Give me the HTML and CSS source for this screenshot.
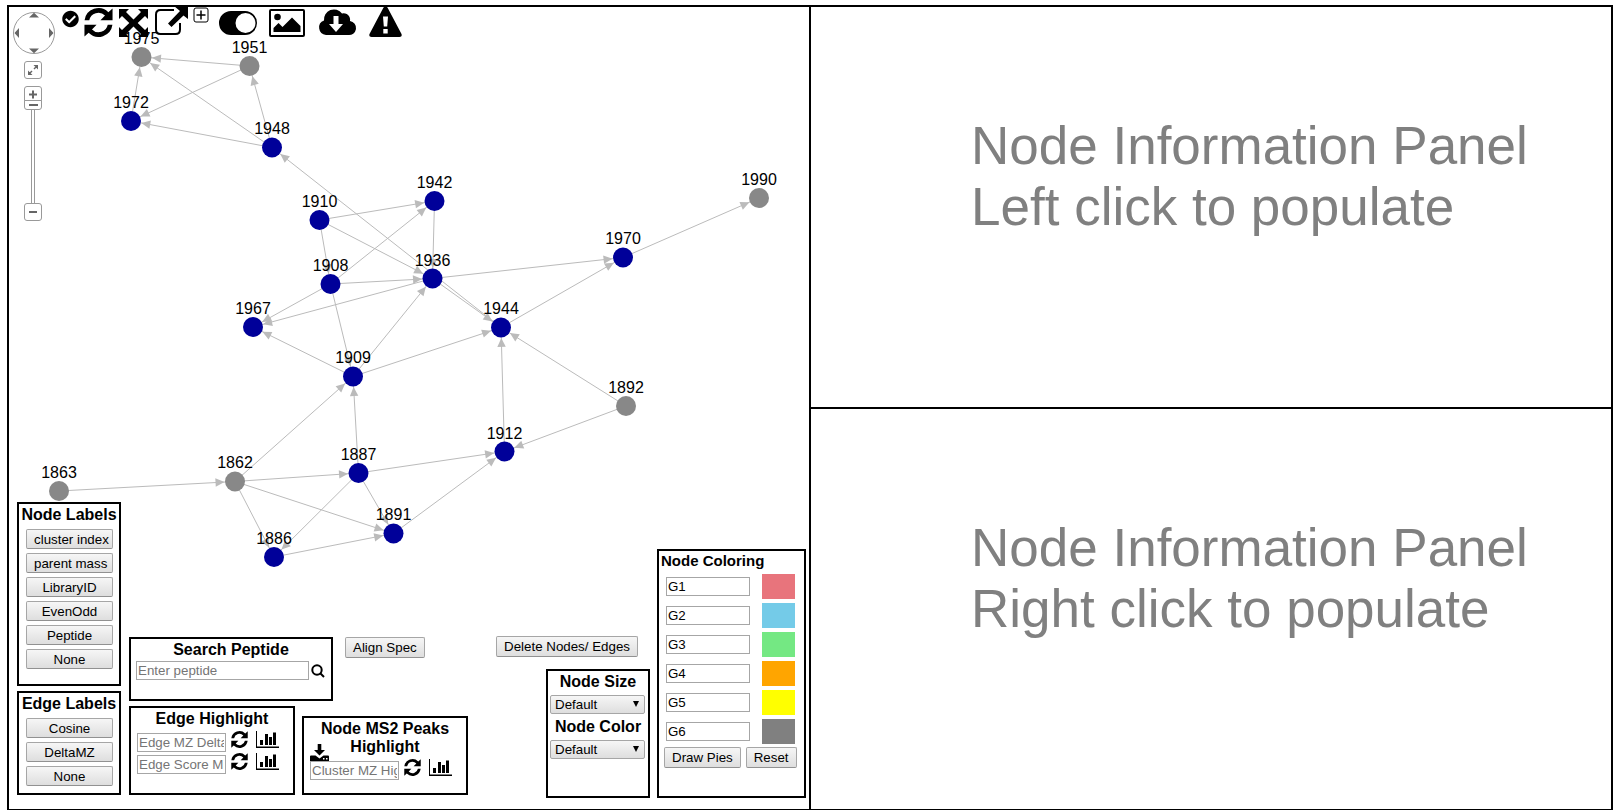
FILE: index.html
```html
<!DOCTYPE html>
<html lang="en">
<head>
<meta charset="utf-8">
<title>Network Visualizer</title>
<link rel="stylesheet" href="styles.css">
</head>
<body>
<svg class="defs" aria-hidden="true">
  <symbol id="i-sync" viewBox="0 0 512 512"><path d="M371 133A164 164 0 0 0 93 216H10A248 248 0 0 1 430 74L504 8V216H290zM141 379A164 164 0 0 0 419 296H502A248 248 0 0 1 82 438L8 504V296H222z"/></symbol>
  <symbol id="i-chart" viewBox="0 0 23 17"><path d="M0 0h1v15.500h22v1.500H0zM4 9h3v5H4zM9 3h3v11H9zM13 6h3v8h-3zM17 1.500h3V14h-3z"/></symbol>
</svg>

<main class="frame">
  <section class="network" aria-label="Molecular network">
    <svg class="graph" viewBox="9 7 800 802" preserveAspectRatio="xMinYMin meet">
      <defs>
        <marker id="arrow" markerUnits="userSpaceOnUse" markerWidth="24" markerHeight="10" refX="24" refY="5" orient="auto"><path class="arrow" d="M13.500 5L4.500 .8V9.200z"/></marker>
      </defs>
      <g class="edges">
        <path d="M249.500 66L141.500 57"/><path d="M249.500 66L131 121"/><path d="M272 147.500L141.500 57"/>
        <path d="M272 147.500L131 121"/><path d="M272 147.500L249.500 66"/><path d="M131 121L141.500 57"/>
        <path d="M501 327.500L272 147.500"/><path d="M319.500 220L434.500 201"/><path d="M319.500 220L432.500 278.500"/>
        <path d="M319.500 220L330.500 284"/><path d="M330.500 284L353 376.500"/><path d="M330.500 284L434.500 201"/>
        <path d="M330.500 284L432.500 278.500"/><path d="M330.500 284L253 327"/><path d="M432.500 278.500L253 327"/>
        <path d="M353 376.500L253 327"/><path d="M353 376.500L432.500 278.500"/><path d="M353 376.500L501 327.500"/>
        <path d="M434.500 201L432.500 278.500"/><path d="M432.500 278.500L623 257.500"/><path d="M501 327.500L623 257.500"/>
        <path d="M623 257.500L759 198"/><path d="M432.500 278.500L501 327.500"/><path d="M626 406L501 327.500"/>
        <path d="M626 406L504.500 451.500"/><path d="M504.500 451.500L501 327.500"/><path d="M393.500 533.500L504.500 451.500"/>
        <path d="M358.500 473L504.500 451.500"/><path d="M358.500 473L353 376.500"/><path d="M235 481.500L353 376.500"/>
        <path d="M235 481.500L358.500 473"/><path d="M235 481.500L393.500 533.500"/><path d="M235 481.500L274 557"/>
        <path d="M59 491L235 481.500"/><path d="M358.500 473L393.500 533.500"/><path d="M358.500 473L274 557"/>
        <path d="M274 557L393.500 533.500"/>
      </g>
      <g class="nodes">
        <circle class="plain" cx="141.500" cy="57" r="10"/><circle class="plain" cx="249.500" cy="66" r="10"/>
        <circle cx="131" cy="121" r="10"/><circle cx="272" cy="147.500" r="10"/>
        <circle cx="319.500" cy="220" r="10"/><circle cx="330.500" cy="284" r="10"/>
        <circle cx="253" cy="327" r="10"/><circle cx="353" cy="376.500" r="10"/>
        <circle class="plain" cx="59" cy="491" r="10"/><circle class="plain" cx="235" cy="481.500" r="10"/>
        <circle cx="358.500" cy="473" r="10"/><circle cx="434.500" cy="201" r="10"/>
        <circle cx="432.500" cy="278.500" r="10"/><circle cx="501" cy="327.500" r="10"/>
        <circle cx="623" cy="257.500" r="10"/><circle class="plain" cx="759" cy="198" r="10"/>
        <circle class="plain" cx="626" cy="406" r="10"/><circle cx="504.500" cy="451.500" r="10"/>
        <circle cx="393.500" cy="533.500" r="10"/><circle cx="274" cy="557" r="10"/>
      </g>
      <g class="labels">
        <text x="141.500" y="44">1975</text><text x="249.500" y="53">1951</text><text x="131" y="108">1972</text>
        <text x="272" y="134">1948</text><text x="319.500" y="207">1910</text><text x="330.500" y="271">1908</text>
        <text x="253" y="314">1967</text><text x="353" y="363">1909</text><text x="59" y="478">1863</text>
        <text x="235" y="468">1862</text><text x="358.500" y="460">1887</text><text x="434.500" y="188">1942</text>
        <text x="432.500" y="266">1936</text><text x="501" y="314">1944</text><text x="623" y="244">1970</text>
        <text x="759" y="185">1990</text><text x="626" y="393">1892</text><text x="504.500" y="439">1912</text>
        <text x="393.500" y="520">1891</text><text x="274" y="544">1886</text>
      </g>
    </svg>

    <div class="panzoom">
      <button class="panner" aria-label="Pan"><svg width="42" height="42" viewBox="0 0 42 42"><circle cx="21" cy="21" r="20.500"/><path d="M21 .8l5 4.700H16zM21 41.200l5-4.700H16zM1.500 21l4.500-5v10zM40.500 21l-4.500-5v10z"/></svg></button>
      <div class="pz-controls">
        <button class="pz-btn fit" aria-label="Fit"><svg width="16" height="16" viewBox="0 0 16 16"><path d="M13 3v4.500L8.500 3zM3 13V8.500L7.500 13zM10.500 4.500l1 1-2 2-1-1zM6.500 8.500l1 1-2 2-1-1z"/></svg></button>
        <button class="pz-btn" aria-label="Zoom in"><svg width="16" height="16" viewBox="0 0 16 16"><path d="M4 6.500h8v2H4zM7 3.500h2v8H7z"/></svg></button>
        <input class="pz-slider" type="range" min="0" max="100" value="100" aria-label="Zoom level">
        <button class="pz-btn" aria-label="Zoom out"><svg width="16" height="16" viewBox="0 0 16 16"><path d="M4 7h8v2H4z"/></svg></button>
      </div>
    </div>

    <div class="toolbar">
      <button aria-label="Select"><svg width="17" height="26" viewBox="0 -136 512 784"><path d="M504 256c0 136.967-111.033 248-248 248S8 392.967 8 256 119.033 8 256 8s248 111.033 248 248zM227.314 387.314l184-184c6.248-6.248 6.248-16.379 0-22.627l-22.627-22.627c-6.248-6.249-16.379-6.249-22.628 0L216 308.118l-70.059-70.059c-6.248-6.248-16.379-6.248-22.628 0l-22.627 22.627c-6.248 6.248-6.248 16.379 0 22.627l104 104c6.249 6.249 16.379 6.249 22.628.001z"/></svg></button>
      <button aria-label="Refresh"><svg width="29" height="32"><use href="#i-sync" y="2" width="29" height="29"/></svg></button>
      <button aria-label="Expand"><svg width="31" height="32" viewBox="0 0 31 32"><path d="M1 3h10L8 6l7.500 7.500L23 6l-3-3h10v10l-3-3-7.300 7 7.300 7 3-3v10H20l3-3-7.500-7.500L8 28l3 3H1V21l3 3 7.300-7L4 10l-3 3z"/></svg></button>
      <button aria-label="Open in new window"><svg width="34" height="32" viewBox="0 0 34 32"><path class="outline" d="M20 4H6.500Q2 4 2 8.500v15Q2 28 6.500 28h15q4.500 0 4.500-4.500V17"/><path d="M20 0h14v13l-4.500-3.500L17.500 21l-3.500-3.500L26 5z"/></svg></button>
      <button aria-label="Add"><svg width="16" height="32" viewBox="0 0 16 32"><rect class="outline thin" x="1" y="2" width="14" height="14" rx="2"/><path d="M7.250 4.500h1.500v3.750h3.750v1.500H8.750v3.750h-1.500V9.750H3.500v-1.500h3.750z"/></svg></button>
      <button aria-label="Toggle"><svg width="48" height="32" viewBox="0 0 48 32"><path fill-rule="evenodd" d="M17 5h14a12 12 0 0 1 0 24H17a12 12 0 0 1 0-24zM31.500 7a10 10 0 1 0 0 20 10 10 0 0 0 0-20z"/></svg></button>
      <button aria-label="Save image"><svg width="40" height="32" viewBox="0 0 40 32"><rect class="outline" x="3" y="4" width="34" height="26" rx="1"/><circle cx="10.500" cy="11" r="3.300"/><path d="M6.500 26v-4l5-5 4 4 9.500-9.500 8.500 8.500v6z"/></svg></button>
      <button aria-label="Download"><svg width="50" height="32" viewBox="0 0 50 32"><path fill-rule="evenodd" d="M14 29A7.500 7.500 0 0 1 12 14.500 10 10 0 0 1 30 7.500 6.500 6.500 0 0 1 38 15 7 7 0 0 1 36 29zM21.500 10V18H17l7 8 7-8h-4.500V10z"/></svg></button>
      <button aria-label="Report a problem"><svg width="37" height="32" viewBox="0 0 37 32"><path fill-rule="evenodd" d="M16.500 1.500Q18.500-.5 20.500 1.500L34.500 28q1 2.800-2 3h-28q-3-.2-2-3zM16 10.500l.8 10h3.400l.8-10zM16.300 23v4.500h4.400V23z"/></svg></button>
    </div>

    <div class="dock dock-left">
      <div class="stack">
        <section class="panel label-panel">
          <h2>Node Labels</h2>
          <div class="options">
            <button class="btn">cluster index</button>
            <button class="btn">parent mass</button>
            <button class="btn">LibraryID</button>
            <button class="btn">EvenOdd</button>
            <button class="btn">Peptide</button>
            <button class="btn">None</button>
          </div>
        </section>
        <section class="panel label-panel edge-labels">
          <h2>Edge Labels</h2>
          <div class="options">
            <button class="btn">Cosine</button>
            <button class="btn">DeltaMZ</button>
            <button class="btn">None</button>
          </div>
        </section>
      </div>
      <div class="stack">
        <div class="row search-row">
          <section class="panel search">
            <h2><label for="peptide">Search Peptide</label></h2>
            <div class="search-line">
              <input class="field" id="peptide" type="text" placeholder="Enter peptide">
              <button class="icon-btn" aria-label="Search"><svg width="14" height="14" viewBox="0 0 14 14"><circle class="outline" cx="6" cy="6" r="4.700"/><path class="outline" d="M9.500 9.500l3.500 3.500"/></svg></button>
            </div>
          </section>
          <button class="btn">Align Spec</button>
        </div>
        <div class="row">
          <section class="panel highlight edge-highlight">
            <h2>Edge Highlight</h2>
            <div class="lines">
              <div class="line">
                <input class="field" type="text" placeholder="Edge MZ Delta" aria-label="Edge MZ Delta">
                <button class="icon-btn" aria-label="Refresh"><svg width="17" height="17"><use href="#i-sync"/></svg></button>
                <button class="icon-btn chart" aria-label="Histogram"><svg width="23" height="17"><use href="#i-chart"/></svg></button>
              </div>
              <div class="line">
                <input class="field" type="text" placeholder="Edge Score Min" aria-label="Edge Score Min">
                <button class="icon-btn" aria-label="Refresh"><svg width="17" height="17"><use href="#i-sync"/></svg></button>
                <button class="icon-btn chart" aria-label="Histogram"><svg width="23" height="17"><use href="#i-chart"/></svg></button>
              </div>
            </div>
          </section>
          <section class="panel highlight peaks">
            <h2>Node MS2 Peaks Highlight</h2>
            <div class="lines">
              <button class="icon-btn download" aria-label="Download"><svg width="19" height="17" viewBox="0 0 19 17"><path d="M7.700 0h3.600v6H15l-5.500 5.500L4 6h3.700zM0 12.500q0-1 1-1h4.500l4 3 4-3H18q1 0 1 1V17H0z"/><path class="hole" d="M13 14h1.500v1.500H13zM16 14h1.500v1.500H16z"/></svg></button>
              <div class="line">
                <input class="field" type="text" placeholder="Cluster MZ Highlight" aria-label="Cluster MZ Highlight">
                <button class="icon-btn" aria-label="Refresh"><svg width="17" height="17"><use href="#i-sync"/></svg></button>
                <button class="icon-btn chart" aria-label="Histogram"><svg width="23" height="17"><use href="#i-chart"/></svg></button>
              </div>
            </div>
          </section>
        </div>
      </div>
    </div>

    <div class="dock dock-right">
      <div class="actions">
        <button class="btn">Delete Nodes/ Edges</button>
        <section class="panel sizing">
          <h2><label for="size">Node Size</label></h2>
          <div class="select"><select id="size"><option>Default</option></select><svg width="6" height="6" viewBox="0 0 6 6"><path d="M0 0h6L3 6z"/></svg></div>
          <h2><label for="color">Node Color</label></h2>
          <div class="select"><select id="color"><option>Default</option></select><svg width="6" height="6" viewBox="0 0 6 6"><path d="M0 0h6L3 6z"/></svg></div>
        </section>
      </div>
      <section class="panel coloring">
        <h3>Node Coloring</h3>
        <div class="groups">
          <div class="group"><input class="field" type="text" value="G1" aria-label="Group 1"><span class="swatch red"></span></div>
          <div class="group"><input class="field" type="text" value="G2" aria-label="Group 2"><span class="swatch blue"></span></div>
          <div class="group"><input class="field" type="text" value="G3" aria-label="Group 3"><span class="swatch green"></span></div>
          <div class="group"><input class="field" type="text" value="G4" aria-label="Group 4"><span class="swatch orange"></span></div>
          <div class="group"><input class="field" type="text" value="G5" aria-label="Group 5"><span class="swatch yellow"></span></div>
          <div class="group"><input class="field" type="text" value="G6" aria-label="Group 6"><span class="swatch gray"></span></div>
        </div>
        <div class="pies"><button class="btn">Draw Pies</button><button class="btn">Reset</button></div>
      </section>
    </div>
  </section>

  <div class="info">
    <section class="info-pane"><p>Node Information Panel<br>Left click to populate</p></section>
    <section class="info-pane"><p>Node Information Panel<br>Right click to populate</p></section>
  </div>
</main>
</body>
</html>
```
FILE: styles.css
```css
*, *::before, *::after {
  box-sizing: border-box;
}

body {
  margin: 0;
  padding: 5px 6px 0 7px;
  background: #fff;
  color: #000;
  font-family: "Liberation Sans", Arial, sans-serif;
  font-size: 16px;
}

button, input, select {
  margin: 0;
  font-family: inherit;
}

svg {
  display: block;
}

.defs {
  position: absolute;
  width: 0;
  height: 0;
}

.frame {
  display: flex;
  min-height: calc(100vh - 5px);
  border: 2px solid #000;
  border-bottom-width: 1px;
}

.network {
  position: relative;
  flex: 1;
  min-width: 0;
  overflow: hidden;
}

/* Graph */
.graph {
  width: 100%;
}

.edges path {
  stroke: #bbb;
  stroke-width: 1;
  fill: none;
  marker-end: url(#arrow);
}

.graph .arrow {
  fill: #bbb;
  stroke: none;
}

.nodes circle {
  fill: #000099;
}

.nodes .plain {
  fill: #888;
}

.labels text {
  font-size: 16px;
  text-anchor: middle;
}

/* Pan and zoom */
.panzoom {
  position: absolute;
  top: 5px;
  left: 4px;
}

.panzoom button {
  display: block;
  padding: 0;
  background: #fff;
}

.panner {
  border: 0;
  border-radius: 50%;
}

.panner circle {
  fill: #fff;
  stroke: #999;
}

.panzoom path {
  fill: #666;
}

.pz-controls {
  display: flex;
  flex-direction: column;
  align-items: flex-start;
  padding-left: 11px;
}

.pz-btn {
  width: 18px;
  height: 18px;
  border: 1px solid #999;
  border-radius: 3px;
}

.pz-btn.fit {
  margin: 7px 0;
}

.pz-slider {
  appearance: none;
  writing-mode: vertical-lr;
  direction: rtl;
  width: 18px;
  height: 103px;
  margin-top: -4px;
  background: linear-gradient(90deg, transparent 7px, #999 7px, #999 8px, #fff 8px, #fff 10px, #999 10px, #999 11px, transparent 11px);
}

.pz-slider::-webkit-slider-thumb {
  appearance: none;
  width: 18px;
  height: 10px;
  border: 1px solid #999;
  border-radius: 0 0 3px 3px;
  background: linear-gradient(#666, #666) center / 9px 2px no-repeat #fff;
}

/* Toolbar */
.toolbar {
  position: absolute;
  top: -1px;
  left: 53px;
  display: flex;
  gap: 5px;
}

.toolbar button, .icon-btn {
  display: flex;
  align-items: flex-start;
  padding: 0;
  border: 0;
  background: none;
}

.outline {
  fill: none;
  stroke: #000;
  stroke-width: 2;
}

.thin {
  stroke-width: 1;
}

.hole {
  fill: #fff;
}

/* Panels over the graph */
.dock {
  position: absolute;
  display: flex;
  align-items: flex-end;
}

.dock-left {
  left: 8px;
  bottom: 14px;
  gap: 8px;
}

.dock-right {
  right: 3px;
  bottom: 11px;
  gap: 7px;
}

.stack {
  display: flex;
  flex-direction: column;
  gap: 5px;
}

.row {
  display: flex;
  align-items: flex-end;
  gap: 7px;
}

.search-row {
  align-items: flex-start;
  gap: 12px;
}

.panel {
  padding-top: 2px;
  border: 2px solid #000;
  background: #fff;
}

h2, h3, p {
  margin: 0;
}

h2 {
  font-size: 16px;
  line-height: 18px;
  text-align: center;
}

h3 {
  padding-left: 2px;
  font-size: 15px;
  line-height: 17px;
}

.btn {
  padding: 2px 7px;
  border: 1px solid #a6a6a6;
  border-bottom-color: #919191;
  border-radius: 2px;
  background: linear-gradient(#f6f6f6, #dedede);
  color: #000;
  line-height: 15px;
  white-space: nowrap;
}

.field {
  padding: 1px;
  border: 1px solid #a6a6a6;
  background: #fff;
  color: #000;
  line-height: 15px;
}

.field::placeholder {
  color: #757575;
}

.label-panel {
  width: 104px;
  padding-bottom: 15px;
}

.edge-labels {
  padding-bottom: 7px;
}

.options {
  display: flex;
  flex-direction: column;
  gap: 4px;
  margin: 5px 6px 0 7px;
}

.options .btn {
  height: 20px;
}

.search {
  width: 204px;
  padding-bottom: 19px;
}

.search-line {
  display: flex;
  align-items: center;
  gap: 2px;
  margin: 2px 0 0 5px;
}

.search-line .field {
  width: 173px;
}

.highlight {
  width: 166px;
}

.edge-highlight {
  padding-bottom: 19px;
}

.peaks {
  padding-bottom: 13px;
}

.lines {
  position: relative;
  display: flex;
  flex-direction: column;
  gap: 1px;
  margin: 3px 0 0 6px;
}

.line {
  display: flex;
  gap: 5px;
  height: 21px;
}

.line .field {
  align-self: flex-end;
  width: 89px;
}

.line .chart {
  padding-left: 3px;
}

.download {
  position: absolute;
  bottom: 100%;
  left: 0;
  margin-bottom: -2px;
}

.actions {
  display: flex;
  flex-direction: column;
  align-items: flex-end;
  gap: 12px;
}

.actions > .btn {
  margin-right: 12px;
}

.sizing {
  width: 104px;
  padding-bottom: 37px;
}

.sizing h2:not(:first-child) {
  margin-top: 4px;
}

.select {
  position: relative;
  margin: 4px 3px 0 2px;
}

.select select {
  display: block;
  appearance: none;
  width: 100%;
  height: 19px;
  padding: 0 4px;
  border: 1px solid #a6a6a6;
  border-radius: 2px;
  background: linear-gradient(#f6f6f6, #dedede);
  color: #000;
}

.select svg {
  position: absolute;
  top: 6px;
  right: 6px;
  pointer-events: none;
}

.coloring {
  width: 149px;
  padding-top: 1px;
  padding-bottom: 28px;
}

.groups {
  display: flex;
  flex-direction: column;
  gap: 4px;
  margin: 5px 9px 0 7px;
}

.group {
  display: flex;
  align-items: center;
  justify-content: space-between;
}

.group .field {
  width: 84px;
}

.swatch {
  width: 33px;
  height: 25px;
}

.red { background: #e8747c; }
.blue { background: #74cbe8; }
.green { background: #74e883; }
.orange { background: orange; }
.yellow { background: yellow; }
.gray { background: gray; }

.pies {
  display: flex;
  gap: 5px;
  margin: 3px 0 0 5px;
}

/* Information panes */
.info {
  display: flex;
  flex: 1;
  flex-direction: column;
  min-width: 0;
  border-left: 2px solid #000;
}

.info-pane {
  flex: 1;
  padding: 108px 0 0 20%;
  color: gray;
  font-size: 53px;
  line-height: 61px;
}

.info-pane + .info-pane {
  border-top: 2px solid #000;
}
```
